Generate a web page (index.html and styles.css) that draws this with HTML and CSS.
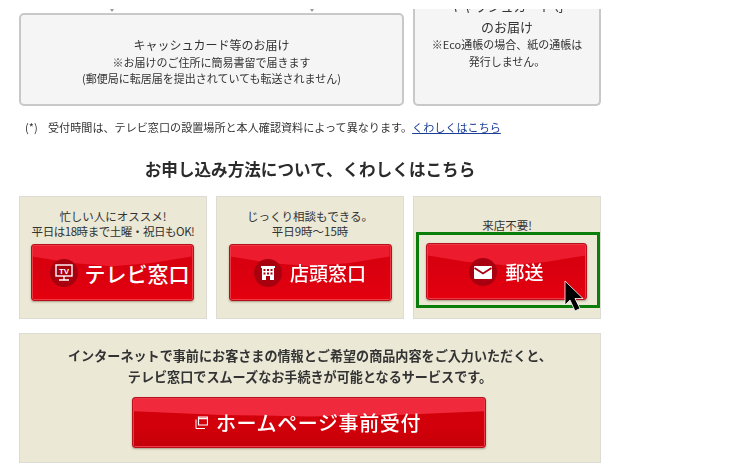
FILE: index.html
```html
<!DOCTYPE html>
<html lang="ja">
<head>
<meta charset="utf-8">
<title>お申し込み方法</title>
<link rel="stylesheet" href="styles.css">
</head>
<body>
<main class="page">
  <section class="top">
    <div class="left-col">
      <div class="ticks"><i class="tick"></i><i class="tick"></i></div>
      <div class="box box-main">
        <p class="box-title">キャッシュカード等のお届け</p>
        <p class="box-sub">※お届けのご住所に簡易書留で届きます</p>
        <p class="box-sub">(郵便局に転居届を提出されていても転送されません)</p>
      </div>
    </div>
    <div class="box box-side">
      <p class="box-title clipped">キャッシュカード等</p>
      <p class="box-title">のお届け</p>
      <p class="box-sub">※Eco通帳の場合、紙の通帳は</p>
      <p class="box-sub">発行しません。</p>
    </div>
  </section>
  <p class="note"><span class="mark">(*)</span>受付時間は、テレビ窓口の設置場所と本人確認資料によって異なります。<a href="#">くわしくはこちら</a></p>
  <h2 class="heading">お申し込み方法について、くわしくはこちら</h2>
  <section class="cards">
    <article class="card">
      <p class="card-text">忙しい人にオススメ!<br><span class="tight">平日は18時まで土曜・祝日もOK!</span></p>
      <a class="btn btn-tv" href="#">
        <span class="ico"><svg width="20" height="20" viewBox="0 0 20 20"><rect x="2" y="2" width="16" height="11" fill="none" stroke="#fff" stroke-width="1.400"/><text x="10" y="11" font-family="Liberation Sans" font-size="8" font-weight="700" fill="#fff" text-anchor="middle">TV</text><path d="M10 13v3.500M5 17h10" stroke="#fff" stroke-width="1.300" fill="none"/></svg></span>
        <span>テレビ窓口</span>
      </a>
    </article>
    <article class="card">
      <p class="card-text">じっくり相談もできる。<br>平日9時～15時</p>
      <a class="btn" href="#">
        <span class="ico"><svg width="16" height="16" viewBox="0 0 16 16"><path d="M1 1h14v2h-1v12h-4v-4H6v4H2V3H1z" fill="#fff"/><path d="M3.500 4h2v2h-2zM7 4h2v2H7zM10.500 4h2v2h-2zM3.500 7.500h2v2h-2zM7 7.500h2v2H7zM10.500 7.500h2v2h-2z" fill="#a8000e"/></svg></span>
        <span>店頭窓口</span>
      </a>
    </article>
    <article class="card">
      <p class="card-text">来店不要!</p>
      <div class="focus">
        <a class="btn" href="#">
          <span class="ico"><svg width="20" height="16" viewBox="0 0 20 16"><rect x="1" y="2" width="18" height="13" rx="1" fill="#fff"/><path d="M1.500 4l8.500 5.500L18.500 4" fill="none" stroke="#a8000e" stroke-width="1.800"/></svg></span>
          <span>郵送</span>
        </a>
      </div>
      <svg class="cursor" width="22" height="34" viewBox="0 0 22 34"><path d="M2 1v24l5-5 5 11 5-2.500-5-10h8z" fill="#000" stroke="#fff" stroke-width="0.800"/></svg>
    </article>
  </section>
  <section class="wide">
    <p class="wide-text">インターネットで事前にお客さまの情報とご希望の商品内容をご入力いただくと、<br>テレビ窓口でスムーズなお手続きが可能となるサービスです。</p>
    <a class="btn btn-wide" href="#">
      <svg class="win" width="13" height="13" viewBox="0 0 13 13"><path d="M3.500 1h9v8h-9z" fill="none" stroke="#fff" stroke-width="1.200"/><path d="M3.500 2.500h9" stroke="#fff" stroke-width="1.500"/><path d="M1 3.500v9h9" fill="none" stroke="#fff" stroke-width="1"/></svg>
      <span>ホームページ事前受付</span>
    </a>
  </section>
</main>
</body>
</html>
```

FILE: styles.css
```css
* { box-sizing: border-box; }
html, body { margin: 0; background: #fff; }
body {
  width: 750px;
  height: 469px;
  overflow: hidden;
  font-family: "Noto Sans CJK JP", "Liberation Sans", sans-serif;
  color: #333;
}
p, h2 { margin: 0; }
.page {
  width: 582px;
  margin-left: 19px;
  padding-top: 9px;
  filter: blur(0.35px);
}
.top { display: flex; gap: 9px; height: 97px; }
.left-col { width: 385px; display: flex; flex-direction: column; }
.ticks { height: 4px; display: flex; gap: 196px; padding-left: 91px; }
.tick {
  width: 0; height: 0;
  border-left: 2px solid transparent;
  border-right: 2px solid transparent;
  border-top: 3px solid #999;
}
.box {
  background: #f5f5f5;
  border: 2px solid #c8c8c8;
  border-radius: 5px;
  text-align: center;
}
.box-main {
  flex: 1;
  display: flex;
  flex-direction: column;
  justify-content: center;
  padding-top: 2px;
}
.box-side {
  width: 188px;
  border-top: 0;
  border-radius: 0 0 5px 5px;
  overflow: hidden;
}
.box-title { font-size: 12px; line-height: 19px; color: #333; }
.box-side .box-title { font-size: 13px; }
.box-sub { font-size: 11px; line-height: 16.500px; color: #333; }
.clipped { margin-top: -13px; margin-bottom: 2px; }
.note {
  font-size: 11.100px;
  line-height: 16px;
  margin-top: 13px;
  padding-left: 6px;
  color: #333;
  white-space: nowrap;
}
.mark { display: inline-block; width: 23px; }
.note a { color: #1a3f96; text-decoration: underline; }
.heading {
  font-size: 16.600px;
  line-height: 24px;
  font-weight: 700;
  text-align: center;
  margin-top: 22px;
  color: #2b2b2b;
}
.cards { display: flex; gap: 9px; margin-top: 15px; }
.card {
  position: relative;
  width: 188px;
  height: 123px;
  background: #ebe8d6;
  border: 1px solid #dcdcd4;
  display: flex;
  flex-direction: column;
  align-items: center;
  padding-top: 12px;
}
.card-text {
  font-size: 11.500px;
  line-height: 15px;
  height: 35px;
  text-align: center;
  color: #333;
  white-space: nowrap;
}
.tight { letter-spacing: -0.450px; }
.card:nth-child(3) .card-text { padding-top: 9px; flex: none; }
.btn {
  position: relative;
  overflow: hidden;
  flex: none;
  display: flex;
  align-items: center;
  justify-content: center;
  gap: 8px;
  width: 163px;
  height: 57px;
  color: #fff;
  text-decoration: none;
  font-size: 19px;
  font-weight: 500;
  background: linear-gradient(#d8000f 40%, #e4000f 100%);
  border: 1px solid #b5101c;
  border-radius: 3px;
  box-shadow: inset 0 0 0 1px #ee3844, 0 1px 2px rgba(90, 70, 40, .45);
}
.btn::before {
  content: "";
  position: absolute;
  inset: 1px;
  background: #ec1c2e;
  clip-path: polygon(0 0, 100% 0, 100% 20%, 75% 32%, 50% 38%, 25% 32%, 0 20%);
}
.btn > * { position: relative; }
.btn-tv {
  font-size: 21px;
  gap: 7px;
  padding-left: 15px;
  margin-right: 2px;
}
.ico {
  flex: none;
  width: 28px;
  height: 28px;
  border-radius: 50%;
  background: #a8000e;
  display: flex;
  align-items: center;
  justify-content: center;
}
.focus {
  flex: none;
  border: 3px solid #0a7d0a;
  width: 184px;
  height: 76px;
  margin-top: -12px;
  align-self: flex-start;
  margin-left: 2px;
  padding: 8px 0 0 7px;
}
.card:nth-child(3) .btn { width: 161px; }
.cursor { position: absolute; left: 149px; top: 83px; }
.wide {
  margin-top: 14px;
  height: 130px;
  background: #ebe8d6;
  border: 1px solid #dcdcd4;
  display: flex;
  flex-direction: column;
  align-items: center;
  padding-top: 11px;
}
.wide-text {
  font-size: 13.100px;
  line-height: 21px;
  font-weight: 700;
  text-align: center;
  color: #333;
  height: 52px;
  white-space: nowrap;
}
.btn-wide {
  width: 354px;
  height: 51px;
  margin-right: 2px;
  padding-right: 2px;
  font-size: 20px;
  letter-spacing: 0.600px;
  background: linear-gradient(#d2000a 60%, #c40008 100%);
  gap: 8px;
}
.btn-wide::before {
  background: #f02a3c;
  clip-path: polygon(0 0, 100% 0, 100% 26%, 75% 34%, 50% 37%, 25% 34%, 0 26%);
}
.win { flex: none; }
```
